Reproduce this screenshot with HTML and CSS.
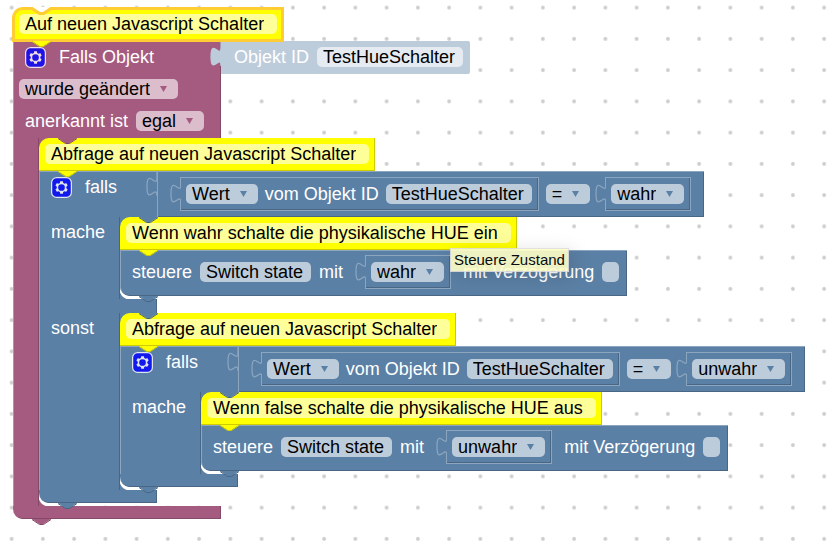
FILE: index.html
```html
<!DOCTYPE html>
<html lang="de">
<head>
<meta charset="utf-8">
<title>Blockly</title>
<link rel="stylesheet" href="styles.css">
</head>
<body>

<!-- shared shapes -->
<svg class="defs" aria-hidden="true">
  <symbol id="tab" viewBox="0 0 19 6">
    <path class="tab-fill" d="M0 0 L7.5 5 H11.5 L19 0z"/>
    <path class="tab-edge" d="M0 .5 L7.5 5.5 H11.5 L19 .5"/>
  </symbol>
  <symbol id="plug" viewBox="-8.8 0 8.8 20">
    <path class="plug-shape" d="M0 0 v5 c0,10 -8,-8 -8,7.5 s8,-2.5 8,7.5"/>
  </symbol>
  <symbol id="gear" viewBox="-0.5 -0.5 17 17">
    <rect width="16" height="16" rx="4" fill="#00f" stroke="#fff"/>
    <path fill="#fff" d="m4.203,7.296 0,1.368 -0.92,0.677 -0.11,0.41 0.9,1.559 0.41,0.11 1.043,-0.457 1.187,0.683 0.127,1.134 0.3,0.3 1.8,0 0.3,-0.299 0.127,-1.138 1.185,-0.682 1.046,0.458 0.409,-0.11 0.9,-1.559 -0.11,-0.41 -0.92,-0.677 0,-1.366 0.92,-0.677 0.11,-0.41 -0.9,-1.559 -0.409,-0.109 -1.046,0.458 -1.185,-0.682 -0.127,-1.138 -0.3,-0.299 -1.8,0 -0.3,0.3 -0.126,1.135 -1.187,0.682 -1.043,-0.457 -0.41,0.11 -0.899,1.559 0.108,0.409z"/>
    <circle cx="8" cy="8" r="2.7" fill="#00f"/>
  </symbol>
</svg>

<svg class="grid" aria-hidden="true">
  <pattern id="dots" width="25" height="25" patternUnits="userSpaceOnUse" patternTransform="translate(-4 -8) scale(1.25)">
    <circle cx="12.5" cy="12.5" r="1.5" fill="#ccc"/>
  </pattern>
  <rect width="100%" height="100%" fill="url(#dots)"/>
</svg>

<main class="workspace">

  <div class="comment selected">
    <svg class="notch" viewBox="0 0 23 8" aria-hidden="true">
      <path fill="#fff" d="M2 0 L9.500 5 H13.500 L21 0z"/>
      <path fill="none" stroke="#fc3" stroke-width="3" d="M0 1.500 H2 L9.500 6.500 H13.500 L21 1.500 H23"/>
    </svg>
    <input class="field" type="text" value="Auf neuen Javascript Schalter" aria-label="Kommentar">
    <svg class="tab"><use href="#tab"/></svg>
  </div>

  <div class="block event">
    <div class="row">
      <div class="event-head">
        <div class="line">
          <button class="gear" type="button" aria-label="Einstellungen"><svg><use href="#gear"/></svg></button>
          <span class="after-gear">Falls Objekt</span>
        </div>
        <div class="line">
          <select class="field drop outdent" aria-label="Auslöser"><option>wurde geändert</option></select>
        </div>
        <div class="line">
          <label for="ack">anerkannt ist</label>
          <select class="field drop" id="ack"><option>egal</option></select>
        </div>
      </div>
      <div class="object-id">
        <svg class="plug"><use href="#plug"/></svg>
        <label for="oid">Objekt ID</label>
        <input class="field oid" id="oid" type="text" value="TestHueSchalter">
      </div>
    </div>

    <div class="branch">
      <div class="arm thin"></div>
      <div class="stack">
        <svg class="tab top"><use href="#tab"/></svg>
        <div class="comment">
          <input class="field" type="text" value="Abfrage auf neuen Javascript Schalter" aria-label="Kommentar">
          <svg class="tab"><use href="#tab"/></svg>
        </div>

        <div class="block if">
          <div class="row">
            <div class="if-head">
              <button class="gear" type="button" aria-label="Einstellungen"><svg><use href="#gear"/></svg></button>
              <span class="after-gear">falls</span>
            </div>
            <div class="compare">
              <svg class="plug"><use href="#plug"/></svg>
              <div class="value">
                <svg class="plug"><use href="#plug"/></svg>
                <select class="field drop" aria-label="Eigenschaft"><option>Wert</option></select>
                <label for="oid1">vom Objekt ID</label>
                <input class="field oid" id="oid1" type="text" value="TestHueSchalter">
              </div>
              <select class="field drop" aria-label="Vergleich"><option>=</option></select>
              <div class="value operand">
                <svg class="plug"><use href="#plug"/></svg>
                <select class="field drop" aria-label="Wahrheitswert"><option>wahr</option></select>
              </div>
            </div>
          </div>

          <div class="branch">
            <div class="arm">mache</div>
            <div class="stack">
              <svg class="tab top"><use href="#tab"/></svg>
              <div class="comment">
                <input class="field" type="text" value="Wenn wahr schalte die physikalische HUE ein" aria-label="Kommentar">
                <svg class="tab"><use href="#tab"/></svg>
              </div>
              <div class="block control">
                <label for="state1">steuere</label>
                <input class="field" id="state1" type="text" value="Switch state">
                <span>mit</span>
                <div class="value">
                  <svg class="plug"><use href="#plug"/></svg>
                  <select class="field drop" aria-label="Wahrheitswert"><option>wahr</option></select>
                </div>
                <label for="delay1">mit Verzögerung</label>
                <input class="field empty" id="delay1" type="text">
                <svg class="tab"><use href="#tab"/></svg>
                <div class="tooltip" role="tooltip">Steuere Zustand</div>
              </div>
            </div>
          </div>

          <div class="bar"></div>

          <div class="branch">
            <div class="arm">sonst</div>
            <div class="stack">
              <svg class="tab top"><use href="#tab"/></svg>
              <div class="comment">
                <input class="field" type="text" value="Abfrage auf neuen Javascript Schalter" aria-label="Kommentar">
                <svg class="tab"><use href="#tab"/></svg>
              </div>

              <div class="block if">
                <div class="row">
                  <div class="if-head">
                    <button class="gear" type="button" aria-label="Einstellungen"><svg><use href="#gear"/></svg></button>
                    <span class="after-gear">falls</span>
                  </div>
                  <div class="compare">
                    <svg class="plug"><use href="#plug"/></svg>
                    <div class="value">
                      <svg class="plug"><use href="#plug"/></svg>
                      <select class="field drop" aria-label="Eigenschaft"><option>Wert</option></select>
                      <label for="oid2">vom Objekt ID</label>
                      <input class="field oid" id="oid2" type="text" value="TestHueSchalter">
                    </div>
                    <select class="field drop" aria-label="Vergleich"><option>=</option></select>
                    <div class="value operand">
                      <svg class="plug"><use href="#plug"/></svg>
                      <select class="field drop" aria-label="Wahrheitswert"><option>unwahr</option></select>
                    </div>
                  </div>
                </div>

                <div class="branch">
                  <div class="arm">mache</div>
                  <div class="stack">
                    <svg class="tab top"><use href="#tab"/></svg>
                    <div class="comment">
                      <input class="field" type="text" value="Wenn false schalte die physikalische HUE aus" aria-label="Kommentar">
                      <svg class="tab"><use href="#tab"/></svg>
                    </div>
                    <div class="block control">
                      <label for="state2">steuere</label>
                      <input class="field" id="state2" type="text" value="Switch state">
                      <span>mit</span>
                      <div class="value">
                        <svg class="plug"><use href="#plug"/></svg>
                        <select class="field drop" aria-label="Wahrheitswert"><option>unwahr</option></select>
                      </div>
                      <label for="delay2">mit Verzögerung</label>
                      <input class="field empty" id="delay2" type="text">
                      <svg class="tab"><use href="#tab"/></svg>
                    </div>
                  </div>
                </div>

                <div class="foot"><svg class="tab"><use href="#tab"/></svg></div>
              </div>
            </div>
          </div>

          <div class="foot"><svg class="tab"><use href="#tab"/></svg></div>
        </div>
      </div>
    </div>

    <div class="foot wide"><svg class="tab"><use href="#tab"/></svg></div>
  </div>

</main>

</body>
</html>
```

FILE: styles.css
```css
* {
  box-sizing: border-box;
}

body {
  margin: 0;
  background: #fff;
  color: #fff;
  font: 18px/20px "Liberation Sans", Arial, sans-serif;
  overflow: hidden;
}

.defs {
  position: absolute;
  width: 0;
  height: 0;
}

.grid {
  position: absolute;
  top: 0;
  left: 0;
  width: 100%;
  height: 100%;
}

.workspace {
  position: relative;
  min-height: 100vh;
  padding: 8px 13px;
  white-space: nowrap;
}

/* colours */

.event {
  --color: #a55b80;
  --light: #c08ca6;
  --dark: #844966;
}

.if, .control {
  --color: #5b80a5;
  --light: #8ca6c0;
  --dark: #496684;
}

.comment {
  --color: #ff0;
  --light: #ff3;
  --dark: #cc0;
}

/* fields */

.field {
  appearance: none;
  border: 0;
  border-radius: 5px;
  margin: 0;
  padding: 0 8px 0 6px;
  height: 20px;
  flex: none;
  background-color: rgba(255, 255, 255, 0.6);
  color: #000;
  font: inherit;
  field-sizing: content;
}

.drop {
  padding-right: 28px;
  background-image: url("data:image/svg+xml,%3Csvg xmlns='http://www.w3.org/2000/svg' width='7' height='6'%3E%3Cpath d='M0 0h7L3.5 6z' fill='%235b80a5'/%3E%3C/svg%3E");
  background-repeat: no-repeat;
  background-position: right 11px center;
}

.event-head .drop {
  background-image: url("data:image/svg+xml,%3Csvg xmlns='http://www.w3.org/2000/svg' width='7' height='6'%3E%3Cpath d='M0 0h7L3.5 6z' fill='%23a55b80'/%3E%3C/svg%3E");
}

.empty {
  width: 17px;
  field-sizing: fixed;
}

.gear {
  width: 21px;
  height: 21px;
  padding: 0;
  border: 0;
  background: none;
  opacity: 0.8;
}

.gear svg {
  display: block;
  width: 21px;
  height: 21px;
}

.after-gear {
  margin-left: 5px;
}

/* connectors */

.tab {
  position: absolute;
  z-index: 1;
  top: 100%;
  left: 19px;
  width: 19px;
  height: 6px;
}

.tab.top {
  top: 0;
}

.tab-fill {
  fill: var(--color);
}

.tab-edge {
  fill: none;
  stroke: var(--dark);
}

.comment .tab-edge {
  stroke: none;
}

.plug {
  position: absolute;
  top: 0;
  right: 100%;
  width: 11px;
  height: 25px;
}

.plug-shape {
  fill: var(--color);
  stroke: var(--light);
}

/* blocks */

.comment {
  position: relative;
  width: max-content;
  height: 33px;
  padding: 6px;
  border-radius: 10px 0 0 0;
  background: var(--color);
  box-shadow: inset -1px -1px var(--dark);
}

.comment .field {
  display: block;
  padding-right: 13px;
}

.selected {
  z-index: 2;
  box-shadow: inset 0 0 0 2px #fc3, 0 0 0 1px #fc3;
}

.notch {
  position: absolute;
  top: -1px;
  left: 17px;
  width: 23px;
  height: 8px;
}

.row, .branch {
  display: flex;
  align-items: stretch;
  width: max-content;
}

.row {
  align-items: flex-start;
}

.event-head {
  display: flex;
  flex-direction: column;
  gap: 12px;
  width: 208px;
  padding: 6px 12px 7px;
  background: var(--color);
  box-shadow: inset 1px 0 var(--light), inset -1px 0 var(--dark);
}

.line {
  display: flex;
  align-items: center;
  gap: 8px;
  height: 20px;
}

.outdent {
  margin-left: -6px;
}

.object-id {
  --color: #bdccdb;
  --light: #bdccdb;
  position: relative;
  display: flex;
  gap: 8px;
  height: 33px;
  padding: 6px 7px 6px 13px;
  border-radius: 0 2px 2px 0;
  background: var(--color);
}

.if-head {
  display: flex;
  gap: 8px;
  width: 118px;
  height: 46px;
  padding: 6px 12px;
  background: var(--color);
  box-shadow: inset 1px 1px var(--light);
}

.compare {
  position: relative;
  display: flex;
  align-items: center;
  gap: 7px;
  height: 46px;
  padding: 0 13px 0 23px;
  background: var(--color);
  box-shadow: inset 1px 1px var(--light), inset -1px -1px var(--dark);
}

.value {
  position: relative;
  display: flex;
  align-items: center;
  gap: 7px;
  height: 34px;
  padding: 0 6px 0 5px;
  border: 1px solid var(--light);
  box-shadow: inset -1px -1px var(--dark);
}

.operand {
  margin-left: 8px;
}

.arm {
  width: 81px;
  padding: 5px 12px;
  background: var(--color);
  box-shadow: inset 1px 0 var(--light), inset -1px 0 var(--dark);
}

.arm.thin {
  width: 26px;
  padding: 0;
}

/* the corners fill in behind the rounded blocks */
.stack {
  position: relative;
  padding-bottom: 3px;
  background:
    linear-gradient(var(--color), var(--color)) 0 0 / 10px 10px no-repeat,
    radial-gradient(circle at 100% 0, transparent 10px, var(--color) 11px) 0 100% / 10px 10px no-repeat;
}

.control {
  position: relative;
  display: flex;
  align-items: center;
  gap: 8px;
  width: max-content;
  height: 46px;
  padding: 0 8px 2px 12px;
  border-radius: 0 0 0 10px;
  background: var(--color);
  box-shadow: inset 1px 1px var(--light), inset -1px -1px var(--dark);
}

.control .value {
  margin: 0 4px 0 14px;
}

.bar, .foot {
  width: 118px;
  background: var(--color);
}

.bar {
  height: 14px;
  box-shadow: inset 1px 0 var(--light), inset -1px 0 var(--dark);
}

.foot {
  position: relative;
  height: 13px;
  border-radius: 0 0 0 10px;
  box-shadow: inset -1px -1px var(--dark);
}

.foot.wide {
  width: 208px;
}

.tooltip {
  position: absolute;
  z-index: 3;
  top: -2px;
  left: 330px;
  padding: 1px 3px;
  border: 1px solid #ddd;
  background: #ffffc7;
  box-shadow: 4px 4px 20px rgba(0, 0, 0, 0.15);
  color: #000;
  font-size: 15px;
  opacity: 0.9;
}
```
